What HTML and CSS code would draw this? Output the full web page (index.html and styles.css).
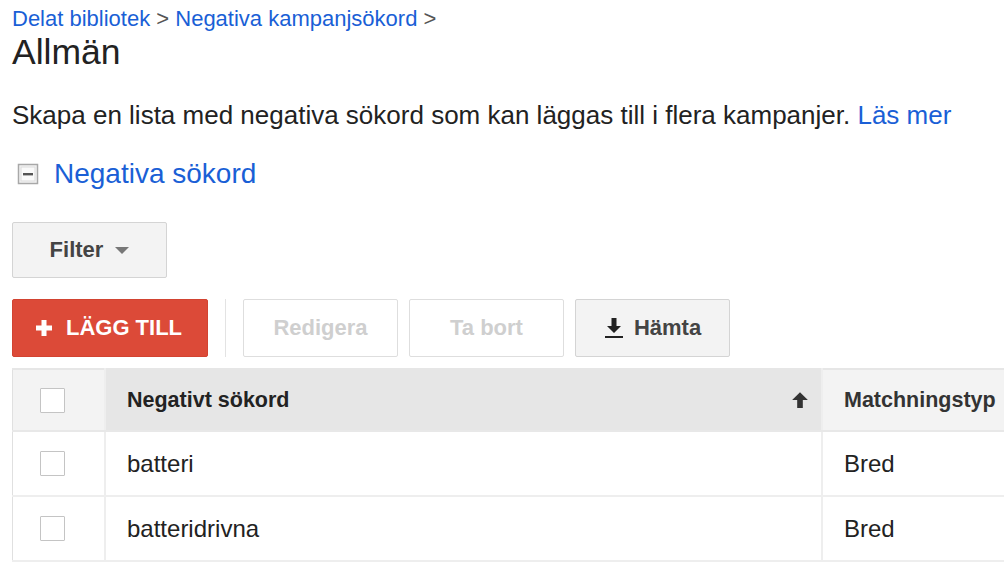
FILE: index.html
```html
<!DOCTYPE html>
<html lang="sv">
<head>
  <meta charset="UTF-8" />
  <meta name="viewport" content="width=device-width, initial-scale=1.0"/>
  <title>Allmän – Negativa kampanjsökord</title>
  <link rel="stylesheet" href="styles.css">
</head>
<body>
  <div class="page">
    <div class="breadcrumb">
      <a href="#">Delat bibliotek</a> &gt; <a href="#">Negativa kampanjsökord</a> &gt;
    </div>
    <h1>Allmän</h1>

    <p class="intro">Skapa en lista med negativa sökord som kan läggas till i flera kampanjer. <a href="#">Läs mer</a></p>

    <div class="section-head">
      <svg class="collapse" width="22" height="22" viewBox="0 0 22 22">
        <rect x="1.5" y="1.5" width="19" height="19" fill="#f4f4f4" stroke="#a8a8a8" stroke-width="1.5"/>
        <rect x="4" y="4" width="14" height="14" fill="#fafafa" stroke="#dcdcdc" stroke-width="1"/>
        <rect x="6" y="10" width="10" height="2.4" fill="#555"/>
      </svg>
      <a href="#">Negativa sökord</a>
    </div>

    <button class="btn filter">Filter <span class="caret"></span></button>

    <div class="toolbar">
      <button class="btn primary">
        <svg width="16" height="16" viewBox="0 0 16 16"><path d="M5.5 0h5v5.5H16v5h-5.5V16h-5v-5.5H0v-5h5.5z" fill="#fff"/></svg>
        LÄGG TILL
      </button>
      <span class="divider"></span>
      <button class="btn disabled">Redigera</button>
      <button class="btn disabled">Ta bort</button>
      <button class="btn">
        <svg width="20" height="22" viewBox="0 0 20 22"><path d="M7.5 1h5v8h4.5L10 16 3 9h4.5z" fill="#222"/><rect x="1" y="19" width="18" height="2" fill="#222"/></svg>
        Hämta
      </button>
    </div>

    <table class="grid">
      <thead>
        <tr>
          <th class="check"><span class="box"></span></th>
          <th class="sorted">Negativt sökord
            <svg class="sort" width="18" height="18" viewBox="0 0 16 16"><path d="M8 1l7 7h-4.5v7h-5V8H1z" fill="#333"/></svg>
          </th>
          <th class="match">Matchningstyp</th>
        </tr>
      </thead>
      <tbody>
        <tr>
          <td class="check"><span class="box"></span></td>
          <td>batteri</td>
          <td>Bred</td>
        </tr>
        <tr>
          <td class="check"><span class="box"></span></td>
          <td>batteridrivna</td>
          <td>Bred</td>
        </tr>
      </tbody>
    </table>
  </div>
</body>
</html>
```

FILE: styles.css
```css
html, body {
  margin: 0;
  overflow: hidden;
}
body {
  font-family: "Liberation Sans", Arial, sans-serif;
  color: #222;
  background: #fff;
}
a {
  color: #1a5fd6;
  text-decoration: none;
}
.page {
  padding: 6px 0 0 12px;
}
.breadcrumb {
  font-size: 22px;
  line-height: 26px;
  color: #555;
}
h1 {
  margin: 0;
  font-size: 35.5px;
  line-height: 40px;
  font-weight: normal;
  color: #222;
}
.intro {
  margin: 28px 0 0;
  font-size: 26px;
  line-height: 30px;
  color: #222;
  white-space: nowrap;
}
.section-head {
  display: flex;
  align-items: center;
  gap: 15px;
  margin-top: 28px;
  height: 32px;
  font-size: 28px;
}
.collapse {
  margin-left: 5px;
}
.btn {
  display: inline-flex;
  align-items: center;
  justify-content: center;
  gap: 10px;
  box-sizing: border-box;
  width: 155px;
  height: 58px;
  padding: 0;
  font-family: "Liberation Sans", Arial, sans-serif;
  font-size: 22px;
  font-weight: bold;
  color: #444;
  background: #f3f3f3;
  border: 1px solid #d4d4d4;
  border-radius: 2px;
}
.filter {
  margin-top: 32px;
  height: 56px;
  gap: 12px;
}
.caret {
  width: 0;
  height: 0;
  border-left: 7px solid transparent;
  border-right: 7px solid transparent;
  border-top: 7px solid #777;
}
.toolbar {
  display: flex;
  align-items: center;
  gap: 11px;
  margin-top: 21px;
}
.btn.primary {
  width: 196px;
  gap: 14px;
  color: #fff;
  background: #dc4a38;
  border-color: #d24331;
  padding-right: 2px;
}
.divider {
  width: 1px;
  height: 58px;
  background: #e3e3e3;
  margin: 0 6px;
}
.btn.disabled {
  color: #cfcfcf;
  background: #fff;
  border-color: #dedede;
}
.grid {
  margin-top: 11px;
  border-collapse: collapse;
  width: 1100px;
  table-layout: fixed;
  font-size: 24px;
}
.grid th, .grid td {
  height: 63px;
  padding: 0 0 0 21px;
  text-align: left;
  border: 2px solid #eeeeee;
}
.grid th {
  height: 60px;
  font-size: 21.5px;
  font-weight: bold;
  color: #333;
  background: #f3f3f3;
  border-top: 2px solid #e6e6e6;
  border-bottom: 2px solid #e8e8e8;
}
.grid th.sorted {
  position: relative;
  width: 694px;
  background: #e6e6e6;
  color: #222;
}
.grid th.match {
  border-left: 2px solid #fafafa;
}
.grid td:first-child, .grid th:first-child {
  border-left: 1px solid #e0e0e0;
}
.grid .check {
  width: 64px;
  padding-left: 27px;
}
.sort {
  position: absolute;
  right: 12px;
  top: 21px;
}
.box {
  display: block;
  width: 23px;
  height: 23px;
  border: 1px solid #c4c4c4;
  border-radius: 1px;
  background: #fff;
}
```
